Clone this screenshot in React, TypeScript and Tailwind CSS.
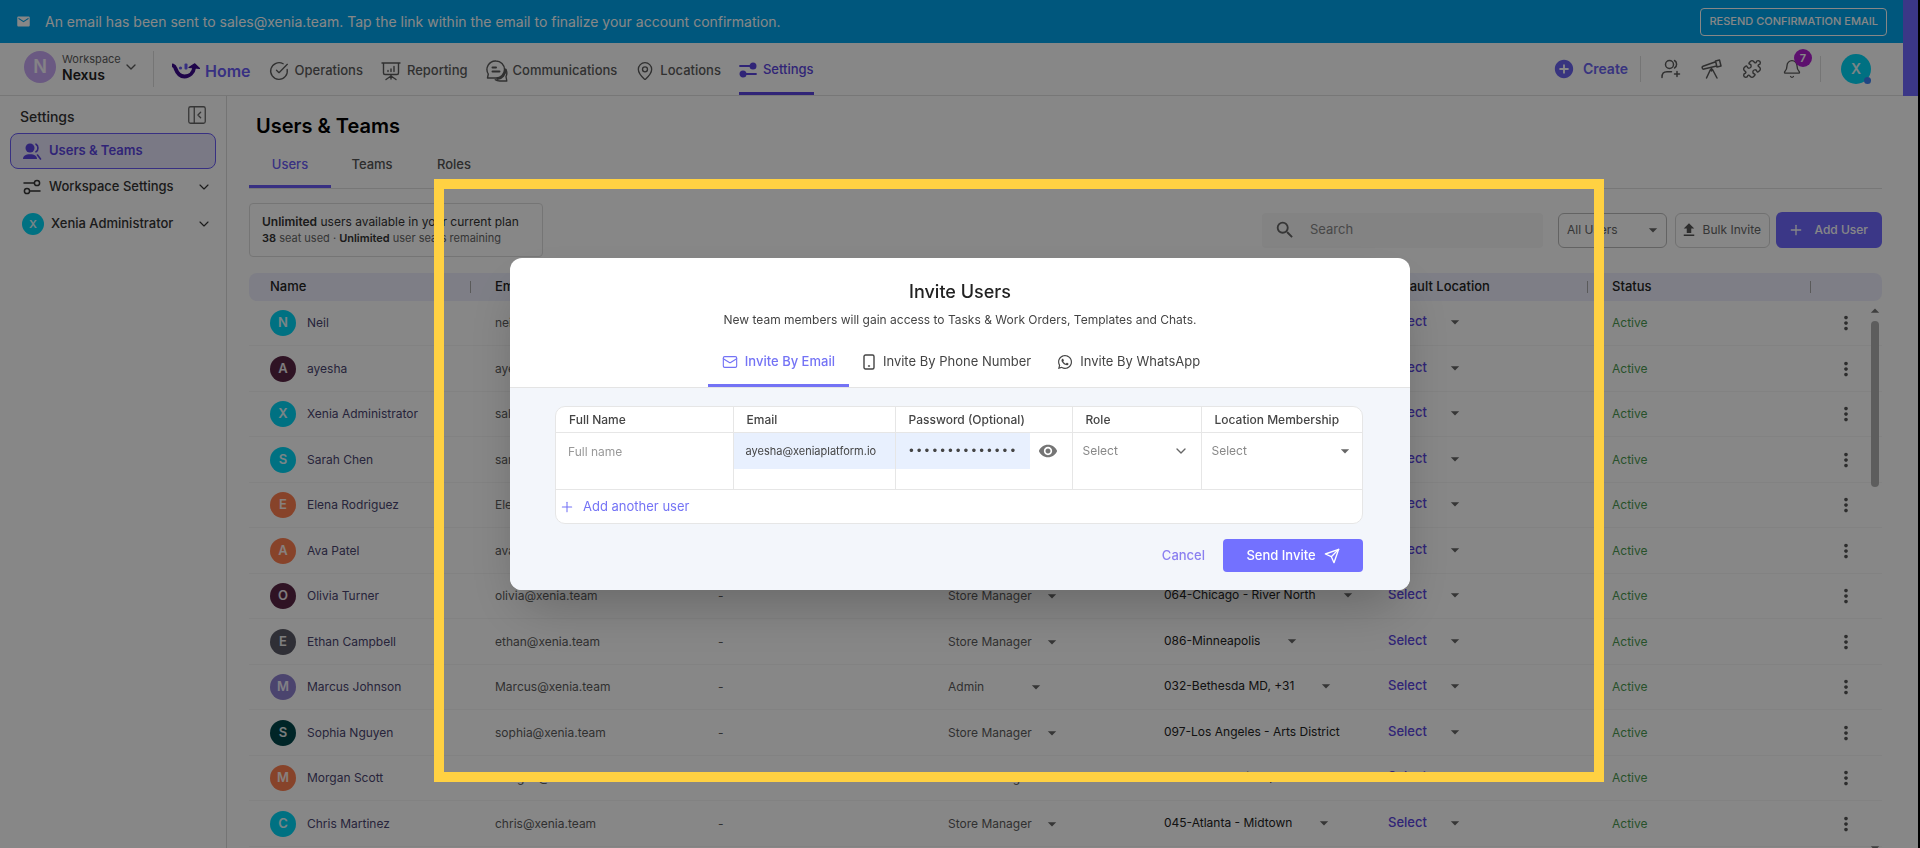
import React from "react";
import { Bell, ChevronDown, CircleCheckBig, Mail, MapPin, PanelLeftClose, Plus, Puzzle } from "lucide-react";
import { FaWhatsapp } from "react-icons/fa";
import { FiSend } from "react-icons/fi";
import { MdAddCircle, MdArrowDropDown, MdEmail, MdMoreVert, MdSearch, MdUpload, MdVisibility } from "react-icons/md";

interface User {
  name: string;
  email: string;
  color: string;
  role: string;
  location: string;
  wide?: boolean;
}

const users: User[] = [
  { name: "Neil", email: "neil@xenia.team", color: "bg-[#00d5f5]", role: "Admin", location: "032-Bethesda MD" },
  { name: "ayesha", email: "ayesha@xenia.team", color: "bg-[#5a2545]", role: "Admin", location: "032-Bethesda MD" },
  { name: "Xenia Administrator", email: "sales@xenia.team", color: "bg-[#00d5f5]", role: "Admin", location: "032-Bethesda MD" },
  { name: "Sarah Chen", email: "sarah@xenia.team", color: "bg-[#00d5f5]", role: "Admin", location: "032-Bethesda MD" },
  { name: "Elena Rodriguez", email: "Elena@xenia.team", color: "bg-[#ff7f50]", role: "Store Manager", location: "086-Minneapolis" },
  { name: "Ava Patel", email: "ava@xenia.team", color: "bg-[#ff7f50]", role: "Store Manager", location: "086-Minneapolis" },
  { name: "Olivia Turner", email: "olivia@xenia.team", color: "bg-[#5a2545]", role: "Store Manager", location: "064-Chicago - River North" },
  { name: "Ethan Campbell", email: "ethan@xenia.team", color: "bg-[#5a5a66]", role: "Store Manager", location: "086-Minneapolis" },
  { name: "Marcus Johnson", email: "Marcus@xenia.team", color: "bg-[#8f80d0]", role: "Admin", location: "032-Bethesda MD, +31" },
  { name: "Sophia Nguyen", email: "sophia@xenia.team", color: "bg-[#00474b]", role: "Store Manager", location: "097-Los Angeles - Arts District", wide: true },
  { name: "Morgan Scott", email: "morgan@xenia.team", color: "bg-[#ff7f50]", role: "Store Manager", location: "120-San Francisco, CA", wide: true },
  { name: "Chris Martinez", email: "chris@xenia.team", color: "bg-[#00d5f5]", role: "Store Manager", location: "045-Atlanta - Midtown" },
];

const LogoIcon = () => (
  <svg width="28" height="17" viewBox="0 0 28 17" fill="none">
    <path d="M1 2.500C2.500 3 3 4 3.500 5.500C5.500 11 8.500 13.500 12.500 13.500C17.500 13.500 21.500 10 22.500 3.500" stroke="#3b0a8c" strokeWidth="3.800" strokeLinecap="round" />
    <path d="M17 4.500L22.800 .8L27.500 5.500L23 5z" fill="#3b0a8c" stroke="#3b0a8c" strokeWidth="1.200" strokeLinejoin="round" />
    <circle cx="8.500" cy="5" r="1.600" fill="#6a5cf5" />
    <rect x="12.500" y=".5" width="3" height="6" rx="1" fill="#6a5cf5" />
  </svg>
);

const ReportingIcon = () => (
  <svg width="20" height="20" viewBox="0 0 20 20" fill="none" stroke="currentColor" strokeWidth="1.400" strokeLinecap="round" strokeLinejoin="round">
    <path d="M1 2h18M2.500 2v10a1.500 1.500 0 0 0 1.500 1.500h12a1.500 1.500 0 0 0 1.500-1.500V2M10 13.500V18M5 18.500L10 15l5 3.500M7 10.500V9.500M10 10.500V8M13 10.500V5.500" />
  </svg>
);

const ChatIcon = () => (
  <svg width="22" height="22" viewBox="0 0 22 22" fill="none" stroke="currentColor" strokeWidth="1.400" strokeLinecap="round" strokeLinejoin="round">
    <path d="M10 1a8.500 8.500 0 0 1 0 17H1.500l.8-4A8.500 8.500 0 0 1 10 1z" />
    <path d="M6.500 7.500h3.500M6.500 11.500h7" strokeWidth="2" />
    <path d="M20 9.500c1.200 2.500 1 5 0 7l.8 4.500h-7c-2 0-3.500-.5-4.500-1.300" />
    <path d="M19.300 9.500c.5 5-3.500 9-8 9.500" strokeWidth="2.200" />
  </svg>
);

const SlidersIcon = ({ filled = false }: { filled?: boolean }) => (
  <svg width="18" height="16" viewBox="0 0 18 16" fill={filled ? "currentColor" : "none"} stroke="currentColor" strokeWidth={filled ? 1.8 : 1.5} strokeLinecap="round">
    <path d="M1 4h10M7.500 12H17" />
    <circle cx="14" cy="4" r="2.600" />
    <circle cx="4" cy="12" r="2.600" />
  </svg>
);

const TeamIcon = () => (
  <svg width="19" height="17" viewBox="0 0 19 17" fill="currentColor">
    <circle cx="7" cy="5" r="4.500" />
    <path d="M0 16c0-3 2.500-4.800 7-4.800s7 1.800 7 4.800z" />
    <path d="M13 1.200c2.600 1.400 2.600 6.200 0 7.600M14.500 12l3 4" fill="none" stroke="currentColor" strokeWidth="1.600" strokeLinecap="round" />
  </svg>
);

const UserPlusIcon = () => (
  <svg width="20" height="20" viewBox="0 0 20 20" fill="none" stroke="currentColor" strokeWidth="1.500" strokeLinecap="round">
    <circle cx="8.500" cy="5.500" r="4" />
    <path d="M13.500 1.500c2.800 1.500 2.800 6 0 7.500M1 18.500c0-4 1.500-5.800 5-5.800h4.500M16 12.500v5M13.500 15h5" />
  </svg>
);

const TelescopeIcon = () => (
  <svg width="21" height="20" viewBox="0 0 21 20" fill="none" stroke="currentColor" strokeWidth="1.500" strokeLinecap="round" strokeLinejoin="round">
    <path d="M18.500 1l1.500 6-4 1-1.500-6zM14.700 2.800L2 7.200c-1.500.6-.8 3.200 1 2.900l12.700-3M9.500 10.500l-4 8.500M11.500 10.500l4.500 8.500M10.500 9v3" />
  </svg>
);

const PhoneIcon = () => (
  <svg width="12" height="16" viewBox="0 0 12 16" fill="none" stroke="currentColor" strokeWidth="1.400">
    <rect x="1" y="1" width="10" height="14" rx="1.500" />
    <path d="M5.500 12h1" strokeLinecap="round" />
  </svg>
);

const Avatar = ({ name, className }: { name: string; className: string }) => (
  <span className={`flex shrink-0 items-center justify-center rounded-full font-semibold text-white/90 ${className}`}>
    {name[0].toUpperCase()}
  </span>
);

interface InlineSelectProps {
  label: string;
  options: string[];
  className?: string;
  gap?: string;
  caret?: boolean;
}

const InlineSelect: React.FC<InlineSelectProps> = ({ label, options, className = "", gap = "gap-2", caret = true }) => (
  <div className={`flex items-center whitespace-nowrap ${gap} ${className}`}>
    <select aria-label={label} className="field-sizing-content appearance-none bg-transparent outline-none">
      {options.map((option) => (
        <option key={option}>{option}</option>
      ))}
    </select>
    {caret && <MdArrowDropDown className="h-5 w-5 shrink-0 text-[#666]" />}
  </div>
);

const TopBar = () => (
  <div className="flex shrink-0">
    <div className="min-w-0 flex-1">
      <div className="flex h-[43px] items-center justify-between bg-[#00a5ec] px-4 text-white">
        <p className="flex items-center gap-3.5 text-sm">
          <MdEmail className="h-[15px] w-[15px]" />
          An email has been sent to sales@xenia.team. Tap the link within the email to finalize your account confirmation.
        </p>
        <button className="h-7 rounded border border-white px-2 text-[11px] font-medium">RESEND CONFIRMATION EMAIL</button>
      </div>

      <header className="flex h-[53px] items-center justify-between border-b border-[#e0e0e0] pr-8 text-[#5c5c5c]">
        <div className="flex h-full items-center">
          <button className="flex w-[130px] items-center pb-1 pl-6 text-left">
            <Avatar name="Nexus" className="mr-1.5 h-8 w-8 bg-[#c9a9f5] text-lg" />
            <span className="flex flex-col">
              <span className="text-[11px] leading-4">Workspace</span>
              <span className="text-sm font-semibold leading-4 text-[#222]">Nexus</span>
            </span>
            <ChevronDown className="ml-0.5 h-4 w-4 shrink-0" />
          </button>
          <span className="ml-[23px] h-9 border-l border-[#ddd]" />
          <nav className="ml-[18px] flex h-full items-center gap-[18px] pt-1 text-[13px] font-medium">
            <a href="#home" className="flex items-center gap-[5px] text-base font-semibold text-[#6a5cf5]">
              <LogoIcon />
              Home
            </a>
            <a href="#operations" className="flex items-center gap-1.5">
              <CircleCheckBig className="h-5 w-5" strokeWidth={1.6} />
              Operations
            </a>
            <a href="#reporting" className="flex items-center gap-1.5">
              <ReportingIcon />
              Reporting
            </a>
            <a href="#communications" className="flex items-center gap-[5px]">
              <ChatIcon />
              Communications
            </a>
            <a href="#locations" className="flex items-center gap-[5px]">
              <MapPin className="h-5 w-5" strokeWidth={1.6} />
              Locations
            </a>
            <a href="#settings" className="flex h-full items-center gap-1.5 border-b-[3px] border-[#5b45e0] text-[#5b45e0]">
              <SlidersIcon filled />
              Settings
            </a>
          </nav>
        </div>

        <div className="flex items-center">
          <button className="flex items-center gap-2 text-sm font-semibold text-[#6a63f0]">
            <MdAddCircle className="h-[22px] w-[22px]" />
            Create
          </button>
          <span className="mx-3 h-[26px] border-l border-[#ddd]" />
          <div className="flex items-center gap-5 pl-2">
            <button aria-label="Invite people"><UserPlusIcon /></button>
            <button aria-label="Explore"><TelescopeIcon /></button>
            <button aria-label="Integrations"><Puzzle className="h-5 w-5" strokeWidth={1.7} /></button>
            <button aria-label="Notifications" className="relative">
              <Bell className="h-5 w-5" strokeWidth={1.6} />
              <span className="absolute -right-2.5 -top-2.5 flex h-[18px] w-[18px] items-center justify-center rounded-full bg-[#b01fd0] text-[11px] font-semibold text-white">
                7
              </span>
            </button>
          </div>
          <span className="ml-[18px] mr-5 h-[26px] border-l border-[#ddd]" />
          <button aria-label="Account" className="relative">
            <Avatar name="X" className="h-[30px] w-[30px] bg-[#00d5f5] text-sm" />
            <span className="absolute bottom-0 right-0 h-[7px] w-[7px] rounded-full bg-[#3b82f6]" />
          </button>
        </div>
      </header>
    </div>
    <div className="w-[15px] bg-[#7069ff]" />
  </div>
);

const Sidebar = () => (
  <aside className="w-[227px] shrink-0 border-r border-[#dcdcdc] px-2.5 pt-[7px] text-[13px] font-medium text-[#333]">
    <div className="flex items-center justify-between pb-1.5 pl-2.5 pr-2">
      <h2 className="pt-1 text-sm">Settings</h2>
      <button aria-label="Collapse sidebar" className="text-[#666]">
        <PanelLeftClose className="h-[22px] w-[22px]" strokeWidth={1.4} />
      </button>
    </div>
    <a href="#users" className="flex h-9 items-center gap-[7px] rounded-lg border border-[#6a5cf5] bg-[#e6e4fb] pl-3 font-semibold text-[#5b45e0]">
      <TeamIcon />
      Users &amp; Teams
    </a>
    <a href="#workspace" className="flex h-9 items-center gap-2 pl-[13px] pr-1">
      <SlidersIcon />
      Workspace Settings
      <ChevronDown className="ml-auto h-4 w-4" strokeWidth={1.7} />
    </a>
    <a href="#admin" className="flex h-[38px] items-center gap-[7px] pl-3 pr-1">
      <Avatar name="X" className="h-[22px] w-[22px] bg-[#00d5f5] text-[11px]" />
      Xenia Administrator
      <ChevronDown className="ml-auto h-4 w-4" strokeWidth={1.7} />
    </a>
  </aside>
);

const headers = ["Name", "Email", "Phone", "Role", "Location Membership", "Default Location", "Status"];

const UsersTable = () => (
  <div className="relative mt-4 min-h-0 flex-1 overflow-hidden text-xs text-[#5c5c5c]">
    <table className="w-full table-fixed border-separate border-spacing-0 text-left">
      <colgroup>
        <col className="w-[225px]" />
        <col className="w-[223px]" />
        <col className="w-[230px]" />
        <col className="w-[216px]" />
        <col className="w-[224px]" />
        <col className="w-[224px]" />
        <col className="w-[223px]" />
        <col className="w-[68px]" />
      </colgroup>
      <thead>
        <tr className="h-7 text-[13px] text-[#222]">
          {headers.map((header) => (
            <th key={header} className="bg-[#eeeffd] p-0 font-medium first:rounded-l-lg">
              <div className="flex items-center justify-between pl-[21px] pr-[3px]">
                {header}
                <span className="h-3 border-l border-[#aaa]" />
              </div>
            </th>
          ))}
          <th className="rounded-r-lg bg-[#eeeffd]" />
        </tr>
      </thead>
      <tbody>
        {users.map((user) => (
          <tr key={user.name} className="odd:h-[45px] even:h-[46px] *:border-b *:border-[#f5f5f5] *:p-0 *:pl-[21px]">
            <td>
              <div className="flex items-center gap-[11px] text-[#4a4570]">
                <Avatar name={user.name} className={`h-[26px] w-[26px] text-[13px] ${user.color}`} />
                {user.name}
              </div>
            </td>
            <td>{user.email}</td>
            <td>-</td>
            <td>
              <InlineSelect label={`Role of ${user.name}`} options={[user.role]} className={user.role === "Admin" ? "w-[98px] justify-between" : ""} gap="gap-2.5" />
            </td>
            <td>
              <InlineSelect label={`Location of ${user.name}`} options={[user.location]} gap="gap-[22px]" caret={!user.wide} className="pb-0.5 text-[#222]" />
            </td>
            <td>
              <InlineSelect label={`Default location of ${user.name}`} options={["Select"]} gap="gap-[18px]" className="pb-0.5 text-[13px] font-medium text-[#5b45e0]" />
            </td>
            <td className="text-[#4c9a50]">Active</td>
            <td>
              <button aria-label={`Actions for ${user.name}`} className="block text-[#555]">
                <MdMoreVert className="h-[22px] w-[22px]" />
              </button>
            </td>
          </tr>
        ))}
      </tbody>
    </table>
    <div className="absolute -bottom-2.5 right-[3px] top-7 flex w-2 flex-col items-center">
      <MdArrowDropDown className="h-5 w-5 shrink-0 rotate-180 text-[#777]" />
      <div className="h-[166px] w-2 shrink-0 rounded-full bg-[#b0b0b0]" />
      <MdArrowDropDown className="mt-auto h-5 w-5 shrink-0 text-[#777]" />
    </div>
  </div>
);

const UsersPage = () => (
  <main className="flex min-w-0 flex-1 flex-col pl-[22px] pr-9 pt-4">
    <h1 className="pl-[7px] text-xl font-semibold leading-7 text-black">Users &amp; Teams</h1>
    <div className="mt-1 flex h-[45px] border-b border-[#e0e0e0] text-[13px] font-medium text-[#555]">
      <button className="w-[82px] border-b-[3px] border-[#6a5cf5] text-[#6a5cf5]">Users</button>
      <button className="w-[82px] pb-[3px]">Teams</button>
      <button className="w-[82px] pb-[3px]">Roles</button>
    </div>

    <div className="mt-3.5 flex items-center justify-between text-xs text-[#666]">
      <div className="flex h-[54px] w-[294px] flex-col justify-center rounded border border-[#dedede] pl-3">
        <p className="leading-4 text-[#333]"><b className="font-semibold">Unlimited</b> users available in your current plan</p>
        <p className="text-[11px] leading-4"><b className="font-semibold text-[#333]">38</b> seat used · <b className="font-semibold text-[#333]">Unlimited</b> user seats remaining</p>
      </div>
      <div className="flex items-center">
        <label className="mr-[15px] flex h-[35px] w-[281px] items-center gap-3.5 rounded bg-[#f7f7f7] pl-3 text-[13px]">
          <MdSearch className="h-[22px] w-[22px] shrink-0 text-[#666]" />
          <input type="search" placeholder="Search" aria-label="Search users" className="w-full bg-transparent outline-none placeholder:text-[#888]" />
        </label>
        <InlineSelect label="User filter" options={["All Users"]} className="mr-2 h-[35px] w-[109px] justify-between rounded-md border border-[#bbb] pl-2 pr-[3px]" />
        <button className="mr-1.5 flex h-[35px] w-[95px] items-center justify-between rounded-md border border-[#d5d5d5] pl-1 pr-2">
          <MdUpload className="h-[18px] w-[18px] text-[#555]" />
          Bulk Invite
        </button>
        <button className="flex h-9 w-[106px] items-center justify-between rounded-md bg-[#7069ff] pl-3 pr-3.5 font-medium text-white">
          <Plus className="h-4 w-4" />
          Add User
        </button>
      </div>
    </div>
    <UsersTable />
  </main>
);

const InviteModal = () => {
  const [password, setPassword] = React.useState("xeniaplatform1");
  const [showPassword, setShowPassword] = React.useState(false);

  return (
    <div className="fixed inset-0 flex items-center justify-center bg-black/47">
      <div role="dialog" aria-labelledby="invite-title" className="w-full max-w-[900px] overflow-hidden rounded-xl bg-white shadow-2xl">
        <div className="border-b border-[#e4e4e4] pt-5 text-center">
          <h2 id="invite-title" className="text-lg font-medium leading-7 text-[#222]">Invite Users</h2>
          <p className="pt-1 text-xs leading-5 text-[#444]">
            New team members will gain access to Tasks &amp; Work Orders, Templates and Chats.
          </p>
          <div className="mt-2 flex h-[49px] justify-center text-[13px] text-[#444]">
            <button className="flex items-center gap-[7px] border-b-[3px] border-[#7473f5] px-3.5 pt-0.5 font-medium text-[#7473f5]">
              <Mail className="h-4 w-4" strokeWidth={1.7} />
              Invite By Email
            </button>
            <button className="flex items-center gap-2 px-3.5 pb-px">
              <PhoneIcon />
              Invite By Phone Number
            </button>
            <button className="flex items-center gap-[7px] px-3 pb-px">
              <FaWhatsapp className="h-4 w-4" />
              Invite By WhatsApp
            </button>
          </div>
        </div>

        <div className="bg-[#f3f6fb] pb-[18px] pl-[45px] pr-[47px] pt-[18px]">
          <div className="overflow-hidden rounded-[10px] border border-[#e6e6e6] bg-white text-xs text-[#444]">
            <table className="w-full table-fixed border-collapse text-left">
              <colgroup>
                <col className="w-[177px]" />
                <col className="w-[162px]" />
                <col className="w-[177px]" />
                <col className="w-[129px]" />
                <col className="w-[162px]" />
              </colgroup>
              <thead>
                <tr className="h-[26px] *:border-r *:border-[#e6e6e6] *:pl-[13px] *:font-medium *:last:border-r-0">
                  <th>Full Name</th>
                  <th>Email</th>
                  <th>Password (Optional)</th>
                  <th>Role</th>
                  <th>Location Membership</th>
                </tr>
              </thead>
              <tbody>
                <tr className="h-[57px] border-y border-[#e6e6e6] *:border-r *:border-[#e6e6e6] *:p-0 *:align-top *:last:border-r-0">
                  <td>
                    <input aria-label="Full name" placeholder="Full name" className="h-9 w-full px-3 outline-none placeholder:text-[#999]" />
                  </td>
                  <td>
                    <input aria-label="Email" defaultValue="ayesha@xeniaplatform.io" className="h-9 w-full bg-[#e8f0fe] px-3 text-[11px] outline-none" />
                  </td>
                  <td>
                    <div className="flex items-center">
                      <input
                        aria-label="Password"
                        type={showPassword ? "text" : "password"}
                        value={password}
                        onChange={(e) => setPassword(e.target.value)}
                        className="h-9 w-[134px] bg-[#e8f0fe] px-3 font-['Liberation_Mono',monospace] text-[13px] outline-none"
                      />
                      <button aria-label="Show password" className="ml-2 text-[#757575]" onClick={() => setShowPassword(!showPassword)}>
                        <MdVisibility className="h-5 w-5" />
                      </button>
                    </div>
                  </td>
                  <td>
                    <div className="flex h-9 items-center pl-2.5 pr-3 text-[#888]">
                      <select aria-label="Role" className="w-full appearance-none bg-transparent outline-none">
                        <option>Select</option>
                      </select>
                      <ChevronDown className="h-4 w-4 shrink-0 text-[#666]" />
                    </div>
                  </td>
                  <td>
                    <InlineSelect label="Location membership" options={["Select"]} className="h-9 justify-between pl-2.5 pr-2 text-[#888]" />
                  </td>
                </tr>
              </tbody>
            </table>
            <button className="flex h-[33px] items-center gap-2 pl-[3px] text-[13px] text-[#7473f5]">
              <Plus className="h-4 w-4" strokeWidth={1.6} />
              Add another user
            </button>
          </div>
          <div className="mt-[15px] flex items-center justify-end gap-[18px] text-[13px] font-medium">
            <button className="text-[#8a7ff0]">Cancel</button>
            <button className="flex h-[33px] w-[140px] items-center justify-center gap-2 rounded bg-[#7371ff] text-white">
              Send Invite
              <FiSend className="h-4 w-4" />
            </button>
          </div>
        </div>
      </div>
    </div>
  );
};

const App = () => (
  <div className="flex h-screen flex-col overflow-hidden border-r-2 border-black bg-white font-['Inter',sans-serif]">
    <TopBar />
    <div className="flex min-h-0 flex-1">
      <Sidebar />
      <UsersPage />
    </div>
    <InviteModal />
    <div className="pointer-events-none fixed left-[434px] top-[179px] h-[603px] w-[1170px] border-10 border-[#ffd142]" />
  </div>
);

export default App;
